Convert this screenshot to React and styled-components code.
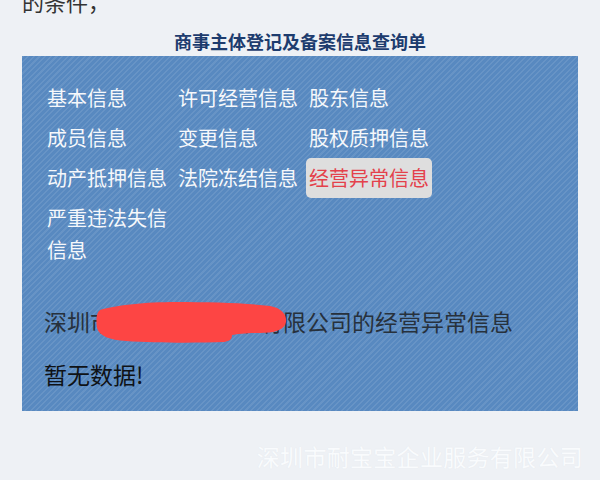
import styled, { createGlobalStyle } from "styled-components";

const GlobalStyle = createGlobalStyle`
  html, body {
    margin: 0;
    padding: 0;
    background: #eef1f5;
    overflow: hidden;
  }
  body {
    font-family: "Noto Sans CJK SC", "Noto Sans", sans-serif;
  }
`;

const Page = styled.div`
  width: 600px;
  height: 480px;
  overflow: hidden;
  background: #eef1f5;
`;

const Intro = styled.p`
  margin: -13px 0 0 22px;
  font-size: 22px;
  line-height: 28px;
  color: #333;
`;

const Title = styled.h1`
  margin: 13px 0 2px;
  text-align: center;
  font-size: 18px;
  line-height: 26px;
  font-weight: 700;
  color: #1d3c6e;
`;

const Panel = styled.section`
  box-sizing: border-box;
  height: 355px;
  margin: 0 22px;
  padding: 22px 22px 0;
  background-color: #5889c0;
  background-image: repeating-linear-gradient(
    135deg,
    rgba(255, 255, 255, 0.09) 0px,
    rgba(255, 255, 255, 0.09) 1.5px,
    transparent 1.5px,
    transparent 4px
  );
`;

const Menu = styled.div`
  display: grid;
  grid-template-columns: repeat(3, 131px);
  align-items: start;
`;

const MenuItem = styled.span`
  justify-self: start;
  padding: 4px 3px;
  font-size: 20px;
  line-height: 32px;
  border-radius: 5px;
  color: ${(p) => (p.$active ? "#e4414b" : "#f6f8fb")};
  background: ${(p) => (p.$active ? "#dedede" : "transparent")};
`;

const Company = styled.div`
  position: relative;
  margin-top: 34px;
  font-size: 23px;
  line-height: 34px;
  color: #27313c;
  white-space: nowrap;
`;

const Redacted = styled.span`
  letter-spacing: 1.5px;
`;

const Scribble = styled.svg`
  position: absolute;
  left: 52px;
  top: -2px;
`;

const Empty = styled.div`
  margin-top: 19px;
  font-size: 23px;
  line-height: 34px;
  color: #0f1216;
`;

const Watermark = styled.div`
  margin-top: 30px;
  padding-right: 17px;
  text-align: right;
  font-size: 23px;
  line-height: 30px;
  letter-spacing: 0.3px;
  color: #f9fbfd;
  text-shadow: 0 0 1px rgba(120, 130, 150, 0.1);
`;

const items = [
  "基本信息",
  "许可经营信息",
  "股东信息",
  "成员信息",
  "变更信息",
  "股权质押信息",
  "动产抵押信息",
  "法院冻结信息",
  "经营异常信息",
  "严重违法失信信息",
];

export default function App() {
  return (
    <Page>
      <GlobalStyle />
      <Intro>的条件，</Intro>
      <Title>商事主体登记及备案信息查询单</Title>
      <Panel>
        <Menu>
          {items.map((t) => (
            <MenuItem key={t} $active={t === "经营异常信息"}>
              {t}
            </MenuItem>
          ))}
        </Menu>
        <Company>
          深圳市<Redacted>某某某某某某</Redacted>有限公司的经营异常信息
          <Scribble width="192" height="42" viewBox="0 0 192 42">
            <path
              d="M4 8 C20 3 50 0 80 0 C115 0 150 1 174 4 C186 6 191 13 190 20 C189 28 178 31 164 31 C150 31 142 32 136 33 C136 37 134 39 128 40 C100 41 60 41 30 39 C14 38 3 34 1 26 C0 18 0 11 4 8 Z"
              fill="#fd4544"
            />
          </Scribble>
        </Company>
        <Empty>暂无数据!</Empty>
      </Panel>
      <Watermark>深圳市耐宝宝企业服务有限公司</Watermark>
    </Page>
  );
}
